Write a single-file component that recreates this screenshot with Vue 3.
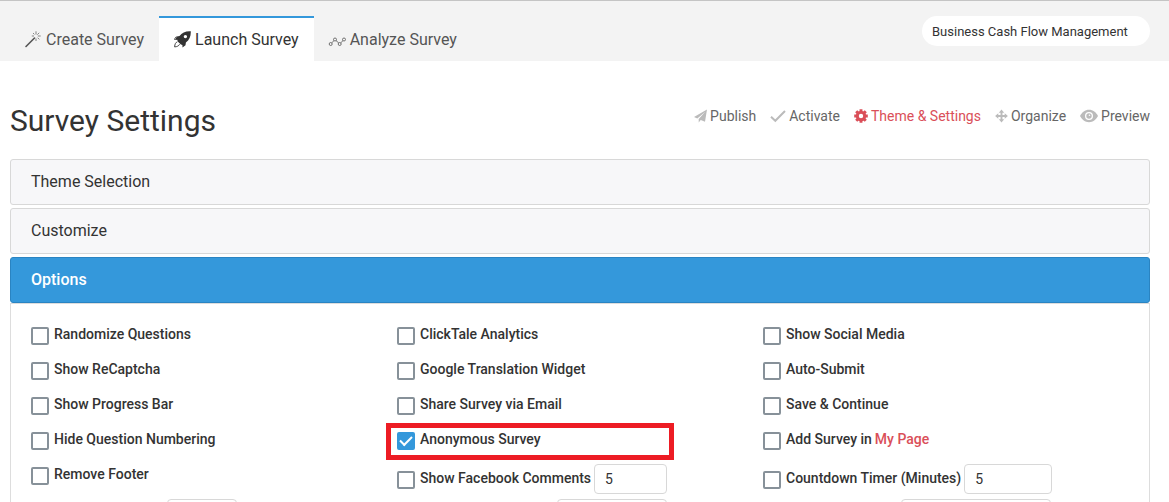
<script setup>
import { ref } from 'vue'

const columns = ref([
  [
    { id: 'randomize', label: 'Randomize Questions' },
    { id: 'recaptcha', label: 'Show ReCaptcha' },
    { id: 'progress', label: 'Show Progress Bar' },
    { id: 'numbering', label: 'Hide Question Numbering' },
    { id: 'footer', label: 'Remove Footer' },
    { id: 'limit-a', size: 'small', value: '' },
  ],
  [
    { id: 'clicktale', label: 'ClickTale Analytics' },
    { id: 'translate', label: 'Google Translation Widget' },
    { id: 'share', label: 'Share Survey via Email' },
    { id: 'anonymous', label: 'Anonymous Survey', checked: true, highlight: true },
    { id: 'facebook', label: 'Show Facebook Comments', size: 'short', value: '5' },
    { id: 'limit-b', size: 'medium', value: '' },
  ],
  [
    { id: 'social', label: 'Show Social Media' },
    { id: 'autosubmit', label: 'Auto-Submit' },
    { id: 'save', label: 'Save & Continue' },
    { id: 'mypage', label: 'Add Survey in', link: 'My Page' },
    { id: 'timer', label: 'Countdown Timer (Minutes)', size: 'wide', value: '5' },
    { id: 'limit-c', size: 'large', value: '' },
  ],
])
</script>

<template>
  <div class="page">
    <header class="topbar">
      <nav class="tabs">
        <a href="#" class="tab">
          <svg width="18" height="18" viewBox="0 0 18 18" fill="none" stroke="currentColor">
            <path d="M2 15.500 10.500 7" stroke-width="1.600" stroke-linecap="round" />
            <path d="M12 .3v3.200M12 7.500V10M7.800 5h2.200M13.800 5h2.900M9 2l1.400 1.400M15.200 1.800l-1.900 1.900M13.600 6.700l1.700 1.700" stroke-width=".7" />
          </svg>
          <span>Create Survey</span>
        </a>
        <a href="#" class="tab active">
          <svg width="18" height="18" viewBox="0 0 18 18" fill="currentColor">
            <path fill-rule="evenodd" d="M17.800.2C13-.2 9 1.600 6.500 5L3.800 5.500 2 9l2.300-.2.400 1.600 3.200 3.200 1.500.4.100 2.500 3-2.300.4-2.600C16.500 9 18 5 17.800.2ZM12.400 3.900a1.700 1.700 0 1 1 0 3.400 1.700 1.700 0 0 1 0-3.400Z" />
            <path d="M4.300 10.900C2.700 11.300 1.800 13 1.600 15.900c2.400-.1 4.200-1 5-2.600M3.400 5.700C2.200 6.500 1.700 7.500 1.600 8.800" fill="none" stroke="currentColor" stroke-width=".9" />
          </svg>
          <span>Launch Survey</span>
        </a>
        <a href="#" class="tab">
          <svg width="18" height="18" viewBox="0 0 18 18" fill="none" stroke="currentColor" stroke-width=".8">
            <circle cx="2.700" cy="13" r="1.500" /><circle cx="7" cy="8.500" r="1.500" />
            <circle cx="11.700" cy="13" r="1.500" /><circle cx="16" cy="8.500" r="1.500" />
            <path d="m3.700 11.900 2.300-2.300M8 9.600l2.700 2.300M12.700 11.900l2.300-2.300" />
          </svg>
          <span>Analyze Survey</span>
        </a>
      </nav>
      <button type="button" class="survey-name">Business Cash Flow Management</button>
    </header>

    <main class="content">
      <div class="heading">
        <h1>Survey Settings</h1>
        <nav class="actions">
          <a href="#">
            <svg width="13" height="14" viewBox="0 0 13 14"><path d="M13 .5 0 8l3.300 1.400L11.300 2.800 4.700 10v3.500l2-2.500 4.300 1.700Z" fill="currentColor" /></svg>
            <span>Publish</span>
          </a>
          <a href="#">
            <svg width="16" height="14" viewBox="0 0 16 14"><path d="m1 7.800 4.300 4L15 2" fill="none" stroke="currentColor" stroke-width="2" /></svg>
            <span>Activate</span>
          </a>
          <a href="#" class="current">
            <svg width="14" height="14" viewBox="0 0 14 14">
              <g stroke="currentColor" fill="none">
                <circle cx="7" cy="7" r="3.700" stroke-width="3" />
                <path d="M7 .2v2.400M7 11.400v2.400M.2 7h2.400M11.400 7h2.400M2.200 2.200l1.700 1.700M10.100 10.100l1.700 1.700M11.800 2.200l-1.700 1.700M3.900 10.100l-1.700 1.700" stroke-width="2.900" />
              </g>
            </svg>
            <span>Theme &amp; Settings</span>
          </a>
          <a href="#">
            <svg width="13" height="14" viewBox="0 0 13 14">
              <path d="M6.500 3v8M2.500 7h8" stroke="currentColor" stroke-width="1.900" />
              <path d="m6.500 .6 2.700 3.200H3.800ZM6.500 13.400l2.700-3.200H3.800ZM.1 7l3.200-2.700v5.400ZM12.900 7 9.700 4.300v5.400Z" fill="currentColor" />
            </svg>
            <span>Organize</span>
          </a>
          <a href="#">
            <svg width="18" height="14" viewBox="0 0 18 14">
              <path fill-rule="evenodd" d="M9 .8C5 .8 2 3.300 0 7c2 3.700 5 6.200 9 6.200s7-2.500 9-6.200C16 3.300 13 .8 9 .8Zm0 2.200a4 4 0 1 1 0 8 4 4 0 0 1 0-8Z" fill="currentColor" />
              <circle cx="9" cy="7" r="2.700" fill="currentColor" />
              <circle cx="9.500" cy="6.200" r=".8" fill="#fff" />
            </svg>
            <span>Preview</span>
          </a>
        </nav>
      </div>

      <div class="accordion">
        <button type="button" class="bar">Theme Selection</button>
        <button type="button" class="bar">Customize</button>
        <section>
          <button type="button" class="bar open" aria-expanded="true">Options</button>
          <div class="options">
            <div v-for="(column, i) in columns" :key="i" class="column">
              <div
                v-for="item in column"
                :key="item.id"
                class="option"
                :class="{ 'has-field': item.size, highlight: item.highlight }"
              >
                <input :id="item.id" v-model="item.checked" type="checkbox" class="tick" :aria-label="item.label || 'Option'" />
                <label v-if="item.label" :for="item.id">{{ item.label }}</label>
                <a v-if="item.link" href="#" class="link">{{ item.link }}</a>
                <input
                  v-if="item.size"
                  v-model="item.value"
                  type="text"
                  class="field"
                  :class="item.size"
                  :aria-label="(item.label || 'Option') + ' value'"
                />
              </div>
            </div>
          </div>
        </section>
      </div>
    </main>
  </div>
</template>

<style>
body {
  margin: 0;
  background: #fff;
}
</style>

<style scoped>
*,
*::after {
  box-sizing: border-box;
}
.page {
  height: 100vh;
  overflow: hidden;
  font-family: Roboto, "Liberation Sans", sans-serif;
  font-size: 14px;
  line-height: 20px;
  color: #333;
}
a {
  text-decoration: none;
}
button,
input {
  font: inherit;
  color: inherit;
  margin: 0;
}
svg {
  flex: none;
}
.topbar {
  display: flex;
  justify-content: space-between;
  align-items: flex-start;
  padding: 15px 19px 0 10px;
  border-top: 1px solid #c4c4c4;
  background: #f3f3f3;
}
.tabs {
  display: flex;
}
.tab {
  display: flex;
  align-items: center;
  gap: 4px;
  height: 45px;
  padding: 0 15px 0 14px;
  border-top: 2px solid transparent;
  font-size: 16px;
  color: #555;
}
.tab.active {
  border-top-color: #3498db;
  background: #fff;
  color: #333;
}
.survey-name {
  width: 228px;
  height: 30px;
  padding: 2px 10px 0;
  border: 0;
  border-radius: 15px;
  background: #fff;
  font-size: 13px;
  text-align: left;
}
.content {
  padding: 40px 19px 0 10px;
}
.heading {
  display: flex;
  justify-content: space-between;
  align-items: flex-start;
  height: 58px;
}
h1 {
  margin: 0;
  font-size: 30px;
  line-height: 40px;
  font-weight: 400;
}
.actions {
  display: flex;
  gap: 14px;
  padding-top: 5px;
}
.actions a {
  display: flex;
  align-items: center;
  gap: 3px;
  color: #666;
}
.actions svg {
  color: #bbb;
}
.actions .current,
.actions .current svg {
  color: #da4f59;
}
.accordion {
  display: flex;
  flex-direction: column;
  gap: 3px;
}
.bar {
  display: block;
  width: 100%;
  height: 46px;
  padding: 0 20px;
  border: 1px solid #d8d8d8;
  border-radius: 3px;
  background: #f7f7f9;
  font-size: 16px;
  text-align: left;
}
.bar.open {
  border-color: #2a84c2;
  background: #3498db;
  color: #fff;
  font-weight: 500;
}
.options {
  display: grid;
  grid-template-columns: repeat(3, 1fr);
  padding: 20px;
  border: 1px solid #ddd;
}
.option {
  position: relative;
  display: flex;
  align-items: flex-start;
  margin-bottom: 15px;
  font-weight: 500;
}
.option.has-field {
  margin-bottom: 5px;
}
.has-field .tick {
  margin-top: 7px;
}
.has-field label {
  padding-top: 4px;
}
.highlight::after {
  content: "";
  position: absolute;
  top: -6px;
  left: -11px;
  width: 288px;
  height: 37px;
  border: 5px solid #ed1c24;
  pointer-events: none;
}
.tick {
  appearance: none;
  flex: none;
  display: grid;
  place-items: center;
  width: 18px;
  height: 18px;
  margin: 3px 5px -1px 0;
  border: 2px solid #879199;
  border-radius: 2px;
  background: #fff;
}
.tick:checked {
  border-color: #3498db;
  background: #3498db;
}
.tick:checked::after {
  content: "";
  width: 12px;
  height: 7px;
  margin-bottom: 4px;
  border: solid #fff;
  border-width: 0 0 2px 2px;
  transform: rotate(-45deg);
}
.link {
  margin-left: 3px;
  color: #da4f59;
}
.field {
  height: 30px;
  margin-left: 3px;
  padding: 0 10px;
  border: 1px solid #d8d8d8;
  border-radius: 4px;
  background: #fff;
  font-weight: 400;
}
.small {
  width: 70px;
  margin-left: 113px;
}
.short {
  width: 73px;
}
.medium {
  width: 110px;
  margin-left: 137px;
}
.wide {
  width: 88px;
}
.large {
  width: 150px;
  margin-left: 115px;
}
</style>
